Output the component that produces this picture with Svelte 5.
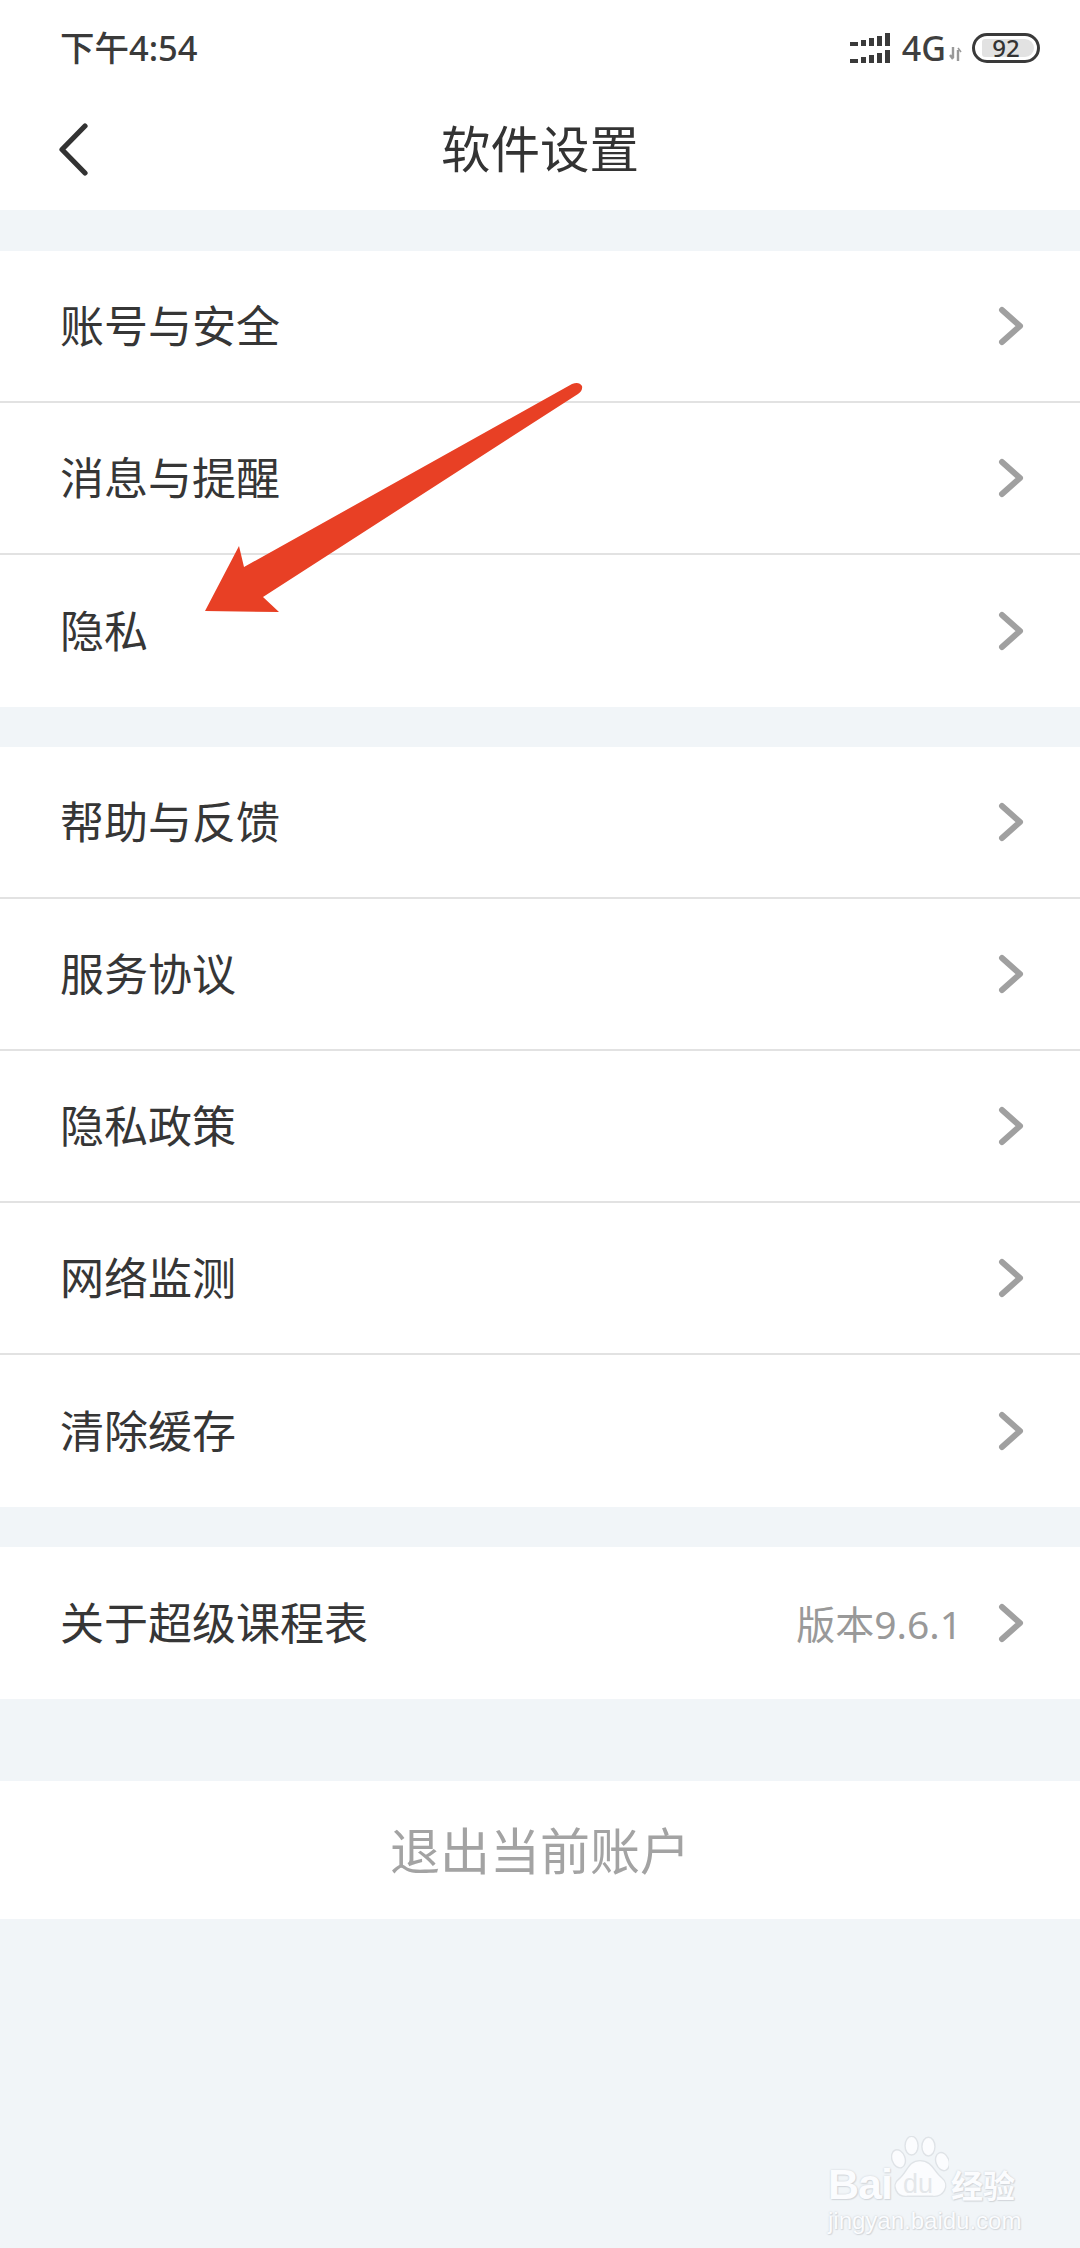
<script lang="ts">
	const groups = [
		[{ label: '账号与安全' }, { label: '消息与提醒' }, { label: '隐私' }],
		[
			{ label: '帮助与反馈' },
			{ label: '服务协议' },
			{ label: '隐私政策' },
			{ label: '网络监测' },
			{ label: '清除缓存' }
		],
		[{ label: '关于超级课程表', value: '版本9.6.1' }]
	];

	// signal meter: two rows of rising bars
	const bars = [
		{ x: 2, w: 8, h: 4 },
		{ x: 13, w: 5, h: 6 },
		{ x: 21, w: 5, h: 8 },
		{ x: 29, w: 5, h: 10 },
		{ x: 37, w: 5, h: 13 }
	];
</script>

<div class="page">
	<header class="top">
		<div class="status">
			<span class="time">下午4:54</span>
			<div class="indicators">
				<svg class="signal" width="44" height="32" viewBox="0 0 44 32" aria-hidden="true">
					{#each bars as b}
						<rect x={b.x} y={14 - b.h} width={b.w} height={b.h} fill="#3a3a3a" />
						<rect x={b.x} y={31 - b.h} width={b.w} height={b.h} fill="#3a3a3a" />
					{/each}
				</svg>
				<span class="net">4G</span>
				<svg class="updown" width="13" height="14" viewBox="0 0 13 14" aria-hidden="true">
					<path d="M4 0v11M1 8l3 4M9 14V3" stroke="#999" stroke-width="2.4" fill="none" />
					<path d="M9 1l3 4" stroke="#999" stroke-width="1.5" fill="none" />
				</svg>
				<div class="battery"><span class="level"></span><span class="pct">92</span></div>
			</div>
		</div>
		<div class="nav">
			<svg class="back" width="30" height="54" viewBox="0 0 30 54" aria-hidden="true">
				<path d="M26 3L3 26.500L26 50" fill="none" stroke="#333" stroke-width="5.200" stroke-linecap="round" stroke-linejoin="round" />
			</svg>
			<h1>软件设置</h1>
		</div>
	</header>

	{#each groups as group}
		<section class="group">
			{#each group as item}
				<div class="row">
					<span class="label">{item.label}</span>
					{#if item.value}
						<span class="value">{item.value}</span>
					{/if}
					<svg class="chev" width="28" height="42" viewBox="0 0 28 42" aria-hidden="true">
						<path d="M4 5L22 21L4 37" fill="none" stroke="#a0a0a0" stroke-width="6" stroke-linecap="round" stroke-linejoin="round" />
					</svg>
				</div>
			{/each}
		</section>
	{/each}

	<button class="logout"><span>退出当前账户</span></button>

	<!-- red annotation arrow over the list -->
	<svg class="arrow" width="400" height="250" viewBox="200 380 400 250" aria-hidden="true">
		<path
			d="M205 611L239 546L244 567L572 384Q579 381 582 386Q583 391 578 394L263 597L279 612Z"
			fill="#e84025"
		/>
	</svg>

	<div class="mark">
		<div class="mark-top">
			<span class="bai">Bai</span>
			<div class="paw">
				<svg width="58" height="68" viewBox="0 0 62 72" aria-hidden="true">
					<g fill="#fbfcfe" stroke="#dfe3e7" stroke-width="1.500">
						<ellipse cx="8" cy="24" rx="7" ry="10" transform="rotate(-20 8 24)" />
						<ellipse cx="22" cy="10" rx="7" ry="10" />
						<ellipse cx="40" cy="11" rx="7" ry="10" />
						<ellipse cx="55" cy="27" rx="7" ry="10" transform="rotate(-20 55 27)" />
						<path d="M31 26C44 26 46 38 54 44C64 52 56 66 44 64H18C6 66 0 52 8 46C18 38 18 26 31 26Z" />
					</g>
				</svg>
				<span class="du">du</span>
			</div>
			<span class="jy">经验</span>
		</div>
		<div class="mark-url">jingyan.baidu.com</div>
	</div>
</div>

<style>
	:global(body) {
		margin: 0;
		background: #f1f5f8;
	}

	.page {
		position: relative;
		height: 2248px;
		overflow: hidden;
		background: #f1f5f8;
		font-family: 'Noto Sans', 'Noto Sans CJK SC', sans-serif;
		color: #333;
	}

	.top {
		height: 210px;
		background: #fff;
		padding: 0 40px 0 60px;
		box-sizing: border-box;
	}

	.status {
		display: flex;
		align-items: center;
		justify-content: space-between;
		height: 96px;
	}

	.time {
		font-size: 34.500px;
		font-weight: 500;
		color: #3a3a3a;
		line-height: 1;
	}

	.indicators {
		display: flex;
		align-items: center;
	}

	.signal {
		margin-right: 10px;
	}

	.net {
		font-size: 34px;
		font-weight: 500;
		color: #3f3f3f;
		line-height: 1;
	}

	.updown {
		margin: 12px 10px 0 3px;
	}

	.battery {
		position: relative;
		width: 68px;
		height: 30px;
		border: 3px solid #3a3a3a;
		border-radius: 15px;
		box-sizing: border-box;
		display: flex;
		align-items: center;
		justify-content: center;
	}

	.level {
		position: absolute;
		left: 7px;
		right: 3px;
		top: 3px;
		bottom: 3px;
		background: #e2e2e2;
		border-radius: 3px 9px 9px 3px;
	}

	.pct {
		position: relative;
		font-size: 24px;
		font-weight: 500;
		line-height: 1;
		color: #333;
	}

	.nav {
		position: relative;
		height: 104px;
		margin-top: 2px;
		display: flex;
		align-items: center;
		justify-content: center;
	}

	.back {
		position: absolute;
		left: -1px;
		top: 25px;
	}

	h1 {
		margin: 0;
		font-size: 49.500px;
		font-weight: 400;
		line-height: 1;
		color: #333;
		transform: translateX(-10px);
	}

	.group {
		margin-top: 40px;
		background: #fff;
	}

	.group:first-of-type {
		margin-top: 41px;
	}

	.row {
		height: 152px;
		box-sizing: border-box;
		padding: 0 54px 0 60px;
		display: flex;
		align-items: center;
		border-bottom: 2px solid #e2e2e2;
	}

	.row:last-child {
		border-bottom: 0;
	}

	.label {
		flex: 1;
		font-size: 44px;
		line-height: 1;
		color: #363636;
	}

	.value {
		font-size: 39px;
		line-height: 1;
		color: #999;
		margin-right: 36px;
	}

	.logout {
		display: block;
		width: 100%;
		height: 138px;
		margin-top: 82px;
		padding: 0 0 4px;
		border: 0;
		background: #fff;
		font-family: inherit;
		font-size: 50px;
		color: #a3a3a3;
	}

	.arrow {
		position: absolute;
		left: 200px;
		top: 380px;
	}

	.mark {
		position: absolute;
		left: 828px;
		top: 2132px;
		width: 220px;
		color: #fbfcfe;
		text-shadow:
			0 0 2px #c8ccd0,
			1px 1px 1px #d6dade;
	}

	.mark-top {
		display: flex;
		align-items: flex-end;
		height: 72px;
	}

	.bai {
		font-family: 'Liberation Sans', sans-serif;
		font-size: 43px;
		font-weight: 700;
		line-height: 1;
		letter-spacing: -1px;
		margin-bottom: -2px;
	}

	.paw {
		position: relative;
		width: 58px;
		height: 68px;
		margin: 0 2px 0 -1px;
	}

	.du {
		position: absolute;
		left: 12px;
		bottom: 6px;
		font-family: 'Liberation Sans', sans-serif;
		font-size: 27px;
		line-height: 1;
		color: #e4e7ea;
		text-shadow: none;
	}

	.jy {
		font-size: 32px;
		font-weight: 700;
		line-height: 1;
		margin-bottom: 2px;
	}

	.mark-url {
		margin-top: 5px;
		font-family: 'Liberation Sans', sans-serif;
		font-size: 24px;
		line-height: 1;
		white-space: nowrap;
	}
</style>
